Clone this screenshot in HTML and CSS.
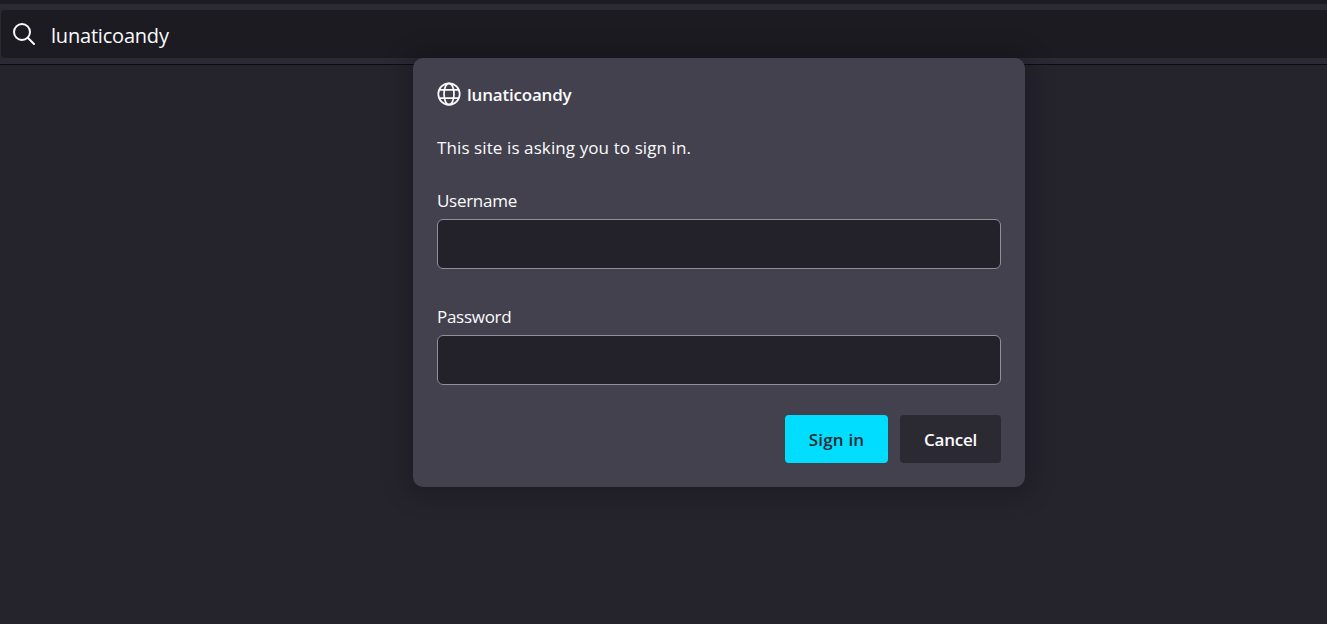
FILE: index.html
```html
<!DOCTYPE html>
<html lang="en">
<head>
<meta charset="utf-8">
<title>Sign in</title>
<link rel="stylesheet" href="styles.css">
</head>
<body>
<header class="toolbar">
  <div class="urlbar">
    <svg class="search-icon" viewBox="0 0 22 22" width="22" height="22" fill="none" stroke="#fbfbfe" stroke-width="2"><circle cx="9" cy="9" r="8"/><path d="M14.8 14.8 L21 21" stroke-linecap="round"/></svg>
    <span class="urltext">lunaticoandy</span>
  </div>
</header>
<div class="dialog">
  <div class="origin">
    <svg class="globe" viewBox="0 0 24 24" width="24" height="24" fill="none" stroke="#fbfbfe" stroke-width="1.7"><circle cx="12" cy="12" r="10.7"/><ellipse cx="12" cy="12" rx="5" ry="10.7"/><path d="M1.8 7.8H22.2M1.8 16.2H22.2"/></svg>
    <span class="origin-name">lunaticoandy</span>
  </div>
  <p class="message">This site is asking you to sign in.</p>
  <label class="field"><span class="field-label">Username</span><input class="field-input" type="text"></label>
  <label class="field"><span class="field-label">Password</span><input class="field-input" type="password"></label>
  <div class="actions">
    <button class="btn btn-primary">Sign in</button>
    <button class="btn btn-secondary">Cancel</button>
  </div>
</div>
</body>
</html>
```
FILE: styles.css
```css
* { box-sizing: border-box; }
html, body { margin: 0; height: 100%; }
body {
  background: #25242d;
  color: #fbfbfe;
  font-family: "Open Sans", "Noto Sans", sans-serif;
  overflow: hidden;
}
.toolbar {
  background: #2b2a33;
  border-top: 4px solid #1c1b22;
  border-bottom: 1px solid #0c0c0d;
  padding: 6px 0 6px 1px;
  height: 65px;
}
.urlbar {
  background: #1c1b22;
  height: 48px;
  border-radius: 4px 0 0 4px;
  display: flex;
  align-items: center;
  padding-left: 12px;
  gap: 16px;
}
.search-icon { flex: none; }
.urltext { font-size: 20px; letter-spacing: -0.2px; padding-top: 2px; }
.dialog {
  position: absolute;
  left: 413px;
  top: 58px;
  width: 612px;
  height: 429px;
  background: #42414d;
  border-radius: 10px;
  padding: 24px;
  box-shadow: 0 2px 24px 8px rgba(0, 0, 0, 0.2);
  display: flex;
  flex-direction: column;
}
.origin { display: flex; align-items: center; gap: 6px; height: 24px; }
.globe { flex: none; }
.origin-name { font-size: 17px; font-weight: 600; letter-spacing: -0.2px; }
.message { margin: 30px 0 0; font-size: 17px; line-height: 24px; letter-spacing: 0.1px; height: 24px; }
.field { display: block; margin-top: 29px; }
.field-label { display: block; font-size: 17px; line-height: 24px; letter-spacing: -0.28px; height: 24px; margin-bottom: 6px; }
.field + .field { margin-top: 36px; }
.field-input {
  display: block;
  width: 100%;
  height: 50px;
  background: #23222b;
  border: 1px solid #8f8f9d;
  border-radius: 6px;
  color: #fbfbfe;
  outline: none;
}
.actions { display: flex; justify-content: flex-end; gap: 12px; margin-top: 30px; }
.btn {
  height: 48px;
  border: none;
  border-radius: 4px;
  font-family: inherit;
  font-size: 17px;
  font-weight: 600;
  letter-spacing: -0.2px;
  padding: 0;
}
.btn-primary { width: 103px; background: #00ddff; color: #2b2a33; letter-spacing: 0.2px; }
.btn-secondary { width: 101px; background: #2b2a33; color: #fbfbfe; }
```
